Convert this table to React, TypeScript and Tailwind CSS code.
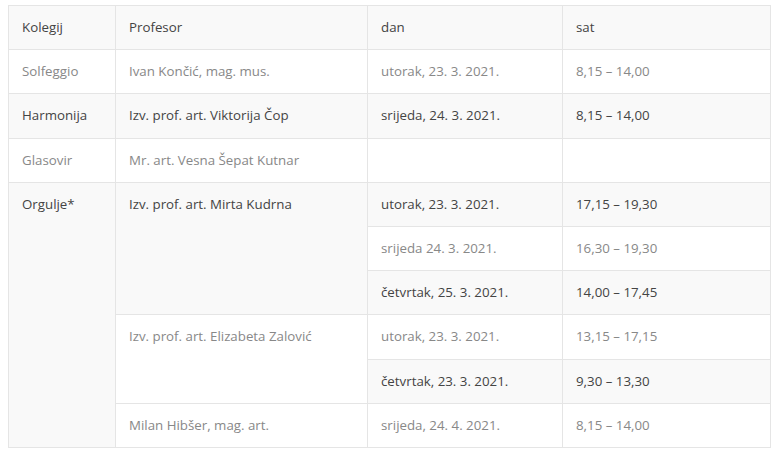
const cell = "border border-[#e5e5e5] px-[13px] py-[11px] align-top text-left font-normal";

type Row = { striped: boolean; cells: { text: string; rowSpan?: number }[] };

const rows: Row[] = [
  { striped: false, cells: [{ text: "Solfeggio" }, { text: "Ivan Končić, mag. mus." }, { text: "utorak, 23. 3. 2021." }, { text: "8,15 – 14,00" }] },
  { striped: true, cells: [{ text: "Harmonija" }, { text: "Izv. prof. art. Viktorija Čop" }, { text: "srijeda, 24. 3. 2021." }, { text: "8,15 – 14,00" }] },
  { striped: false, cells: [{ text: "Glasovir" }, { text: "Mr. art. Vesna Šepat Kutnar" }, { text: "" }, { text: "" }] },
  { striped: true, cells: [{ text: "Orgulje*", rowSpan: 6 }, { text: "Izv. prof. art. Mirta Kudrna", rowSpan: 3 }, { text: "utorak, 23. 3. 2021." }, { text: "17,15 – 19,30" }] },
  { striped: false, cells: [{ text: "srijeda 24. 3. 2021." }, { text: "16,30 – 19,30" }] },
  { striped: true, cells: [{ text: "četvrtak, 25. 3. 2021." }, { text: "14,00 – 17,45" }] },
  { striped: false, cells: [{ text: "Izv. prof. art. Elizabeta Zalović", rowSpan: 2 }, { text: "utorak, 23. 3. 2021." }, { text: "13,15 – 17,15" }] },
  { striped: true, cells: [{ text: "četvrtak, 23. 3. 2021." }, { text: "9,30 – 13,30" }] },
  { striped: false, cells: [{ text: "Milan Hibšer, mag. art." }, { text: "srijeda, 24. 4. 2021." }, { text: "8,15 – 14,00" }] },
];

export default function App() {
  return (
    <div className="min-h-screen bg-white pl-[8px] pt-[5px] font-['Open_Sans',sans-serif] text-[13.3px] leading-[21.2px]">
      <table className="w-[762px] table-fixed border-collapse">
        <colgroup>
          <col className="w-[107px]" />
          <col className="w-[252px]" />
          <col className="w-[195px]" />
          <col className="w-[208px]" />
        </colgroup>
        <thead>
          <tr className="bg-[#f9f9f9] text-[#444]">
            <th className={cell}>Kolegij</th>
            <th className={cell}>Profesor</th>
            <th className={cell}>dan</th>
            <th className={cell}>sat</th>
          </tr>
        </thead>
        <tbody>
          {rows.map((row, i) => (
            <tr key={i} className={row.striped ? "bg-[#f9f9f9] text-[#444]" : "bg-white text-[#888]"}>
              {row.cells.map((c, j) => (
                <td key={j} rowSpan={c.rowSpan} className={cell}>
                  {c.text}
                </td>
              ))}
            </tr>
          ))}
        </tbody>
      </table>
    </div>
  );
}
